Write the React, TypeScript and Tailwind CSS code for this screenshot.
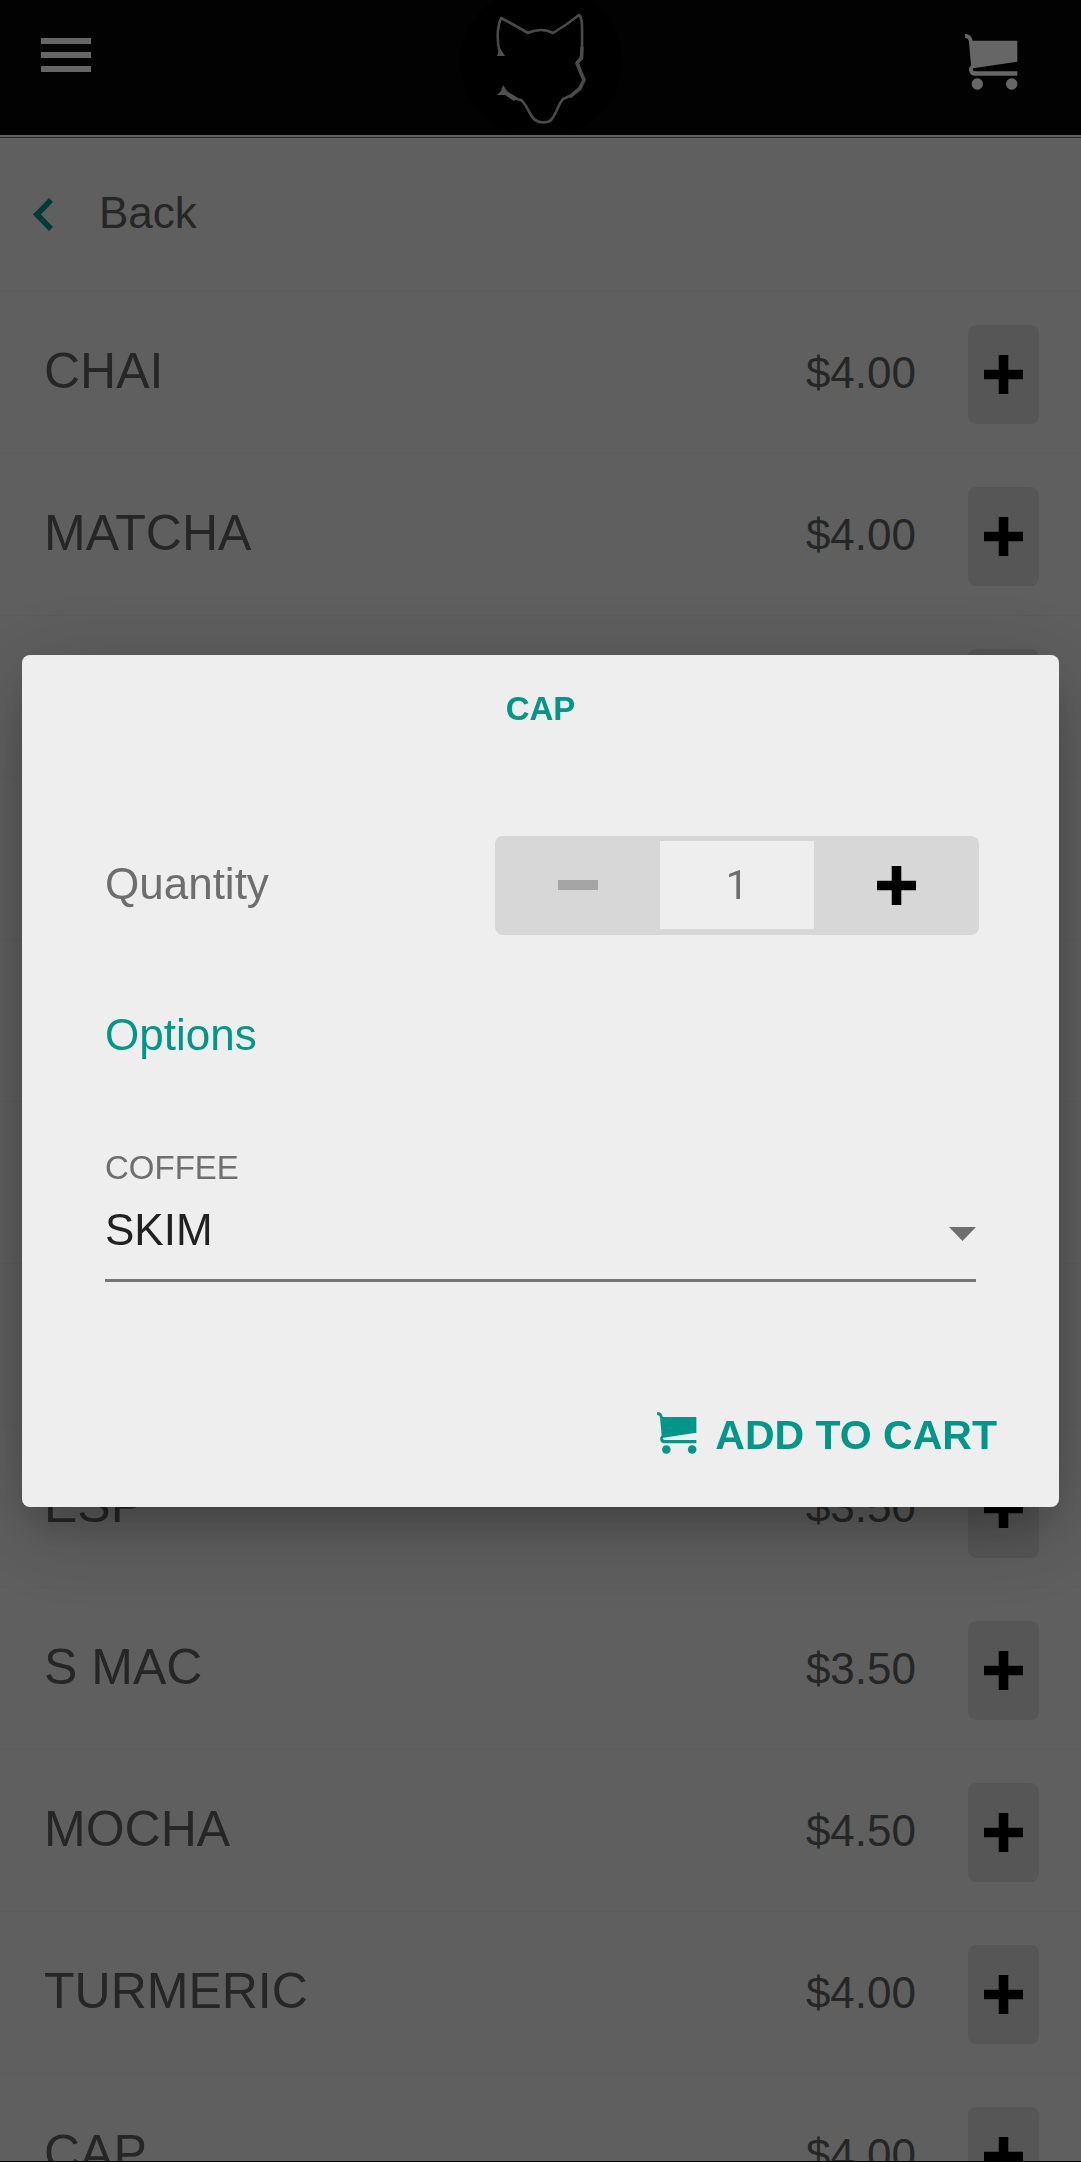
import { useState } from "react";

type Item = { name: string; price: string };

const items: Item[] = [
  { name: "CHAI", price: "$4.00" },
  { name: "MATCHA", price: "$4.00" },
  { name: "", price: "" },
  { name: "", price: "" },
  { name: "", price: "" },
  { name: "", price: "" },
  { name: "", price: "" },
  { name: "ESP", price: "$3.50" },
  { name: "S MAC", price: "$3.50" },
  { name: "MOCHA", price: "$4.50" },
  { name: "TURMERIC", price: "$4.00" },
  { name: "CAP", price: "$4.00" },
];

function CartIcon({ className }: { className: string }) {
  return (
    <svg viewBox="0 0 53 56" className={className} fill="currentColor" aria-hidden="true">
      <path d="M0 0C4 0 7 2.500 7.700 6.800H52.300V27.800L8 34.300C7.500 35.700 8.200 37.300 10 37.300H52.300V41.700H10C4.500 41.700 2 35 6 31.200L4 8.500C3.700 5 2.500 4 0 4Z" />
      <circle cx="12.300" cy="50" r="5.700" />
      <circle cx="46.700" cy="50" r="5.700" />
    </svg>
  );
}

function PlusIcon() {
  return (
    <svg viewBox="0 0 39 39" className="size-[39px]" fill="currentColor" aria-hidden="true">
      <path d="M14.700 0h9.600v14.700H39v9.600H24.300V39h-9.600V24.300H0v-9.600h14.700z" />
    </svg>
  );
}

function WolfLogo() {
  return (
    <svg viewBox="0 0 164 134" className="h-[134px] w-[164px]" fill="none" aria-label="Wolf logo" role="img">
      <ellipse cx="82" cy="62" rx="81" ry="76" fill="#000" />
      <g stroke="#b8b8b8" strokeWidth="2.600" strokeLinejoin="round" strokeLinecap="round">
        <path d="M41 54C38 42 38 28 42 18L55 25L69 33C77 29 87 29 94 33L108 24L120 15C124 18 123 30 123 48L122 58L118 63L122 73L125 80L121 89L113 95L104 99C98 106 98 114 91 121C87 123 79 123 75 119C69 113 69 106 62 100L54 98L46 93" />
        <path d="M123 48L122.500 58L118 63L122 73L125 80L121 88L112 96" strokeWidth="3.600" />
      </g>
      <path d="M38 56L41 48L46 56Z" fill="#c8c8c8" />
      <path d="M38 95L42 91L44 85L48 91L59 98L55 101L46 95Z" fill="#c8c8c8" />
    </svg>
  );
}

export default function App() {
  const [qty, setQty] = useState(1);
  return (
    <div className="relative h-screen overflow-hidden bg-[#eee] font-['Liberation_Sans',Arial,sans-serif] text-[#5f5f5f]">
      <header className="grid h-[135px] grid-cols-[1fr_auto_1fr] items-start bg-[#060606] pl-[41px] pr-[41px]">
        <button aria-label="Menu" className="mt-[38px] flex w-[50px] flex-col gap-2">
          <span className="h-1.5 w-[50px] bg-white" />
          <span className="h-1.5 w-[50px] bg-white" />
          <span className="h-1.5 w-[50px] bg-white" />
        </button>
        <WolfLogo />
        <button aria-label="Cart" className="mr-[22px] mt-[34px] justify-self-end text-white">
          <CartIcon className="h-[56px] w-[53px]" />
        </button>
      </header>
      <div className="h-[3px] border-b border-[#666] bg-[#eee]" />
      <a href="#menu" className="flex h-[154px] items-center border-b-2 border-[#e8e8e8] pl-[33px] text-[44px] leading-[52px]">
        <svg viewBox="0 0 20 33" className="h-[33px] w-5 text-[#009688]" fill="currentColor" aria-hidden="true">
          <path d="M16 0L20 4L8 16.500L20 29L16 33L0 16.500Z" />
        </svg>
        <span className="ml-[46px] pb-[3px]">Back</span>
      </a>
      <ul>
        {items.map((item, i) => (
          <li key={i} className="flex h-[162px] items-center border-b border-[#e6e6e6] pl-11 pr-[42px] pt-1">
            <span className="flex-1 pb-2 text-[50px] leading-[60px]">{item.name}</span>
            <span className="pb-1 text-[44px] leading-[52px]">{item.price}</span>
            <button
              aria-label={`Add ${item.name}`}
              className="ml-[52px] flex h-[99px] w-[71px] items-center justify-center rounded-lg bg-[#d8d8d8] text-black"
            >
              <PlusIcon />
            </button>
          </li>
        ))}
      </ul>

      <div className="fixed inset-0 flex items-center justify-center border-b border-black bg-black/60 px-[22px]">
        <section
          role="dialog"
          aria-labelledby="dialog-title"
          className="w-full rounded-lg bg-[#eee] pb-[46px] pt-[34px] text-[44px] leading-[52px] text-[#6e6e6e] shadow-[0_24px_36px_-12px_rgba(0,0,0,0.2),0_20px_90px_12px_rgba(0,0,0,0.2)]"
        >
          <h2 id="dialog-title" className="text-center text-[33px] font-bold leading-10 text-[#009688]">
            CAP
          </h2>
          <div className="mt-[107px] flex items-center justify-between pl-[83px] pr-20">
            <label htmlFor="qty" className="pb-[3px]">Quantity</label>
            <div className="flex h-[99px] w-[484px] items-center overflow-hidden rounded-lg bg-[#d7d7d7]">
              <button
                aria-label="Decrease quantity"
                disabled={qty <= 1}
                onClick={() => setQty(qty - 1)}
                className="flex h-full flex-1 items-center justify-center text-[#a5a5a5]"
              >
                <span className="h-2.5 w-10 bg-current" />
              </button>
              <input
                id="qty"
                value={qty}
                readOnly
                className="h-[88px] w-[154px] bg-[#eee] text-center font-[Roboto,sans-serif] text-[40px] leading-[52px] text-[#6e6e6e] outline-none"
              />
              <button
                aria-label="Increase quantity"
                onClick={() => setQty(qty + 1)}
                className="flex h-full flex-1 items-center justify-center text-black"
              >
                <PlusIcon />
              </button>
            </div>
          </div>
          <h3 className="mt-[74px] px-[83px] text-[#009688]">Options</h3>
          <div className="mt-[87px] px-[83px]">
            <label htmlFor="coffee" className="block text-[33px] leading-10">COFFEE</label>
            <div className="relative border-b-[3px] border-[#757575]">
              <select
                id="coffee"
                defaultValue="SKIM"
                className="block h-[91px] w-full appearance-none bg-transparent pb-1.5 text-[44px] leading-[52px] text-[#212121] outline-none"
              >
                <option>SKIM</option>
              </select>
              <svg viewBox="0 0 27 14" className="pointer-events-none absolute right-0 top-[39px] h-3.5 w-[27px]" fill="#6e6e6e" aria-hidden="true">
                <path d="M0 0H27L13.500 14Z" />
              </svg>
            </div>
          </div>
          <div className="mt-[127px] flex justify-end pr-[62px]">
            <button className="flex items-center text-[41px] font-bold leading-[52px] text-[#009688]">
              <CartIcon className="mr-[18px] mb-1 h-[42px] w-10" />
              ADD TO CART
            </button>
          </div>
        </section>
      </div>
    </div>
  );
}
